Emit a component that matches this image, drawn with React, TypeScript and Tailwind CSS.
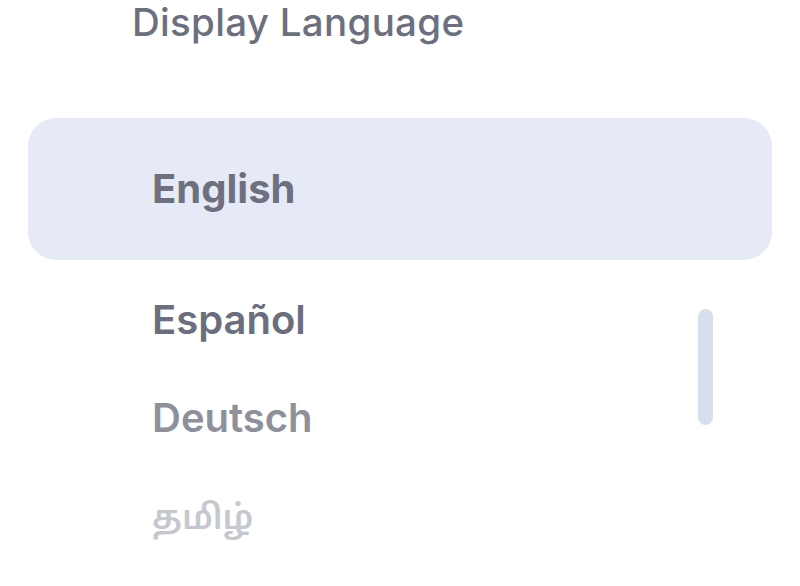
const languages = [
  { label: "English", selected: true, color: "text-[#6e7080]", size: "text-[40px] font-bold" },
  { label: "Español", selected: false, color: "text-[#6b6e7e]", size: "text-[40px] font-semibold" },
  { label: "Deutsch", selected: false, color: "text-[#8e909c]", size: "text-[40px] font-semibold" },
  { label: "தமிழ்", selected: false, color: "text-[#c6c8cf]", size: "text-[34px] font-semibold" },
];

const App = () => {
  return (
    <div
      className="w-[800px] h-[586px] overflow-hidden bg-white"
      style={{ fontFamily: "Inter, 'Noto Sans', 'Noto Sans Tamil', sans-serif" }}
    >
      <h1 className="pl-[132px] text-[38.5px] leading-[44px] font-[550] text-[#6b6f80] tracking-[0.3px]">
        Display Language
      </h1>
      <div className="relative mt-[74px]">
        <div className="mx-[28px] h-[142px] rounded-[28px] bg-[#e6eaf6] flex items-center pl-[124px]">
          <span className="text-[40px] font-bold text-[#6e7080]">English</span>
        </div>
        <ul className="flex flex-col pt-[11px]">
          {languages
            .filter((lang) => !lang.selected)
            .map((lang) => (
              <li key={lang.label} className="h-[98px] flex items-center pl-[152px]">
                <span className={`${lang.size} ${lang.color}`}>{lang.label}</span>
              </li>
            ))}
        </ul>
        <div className="absolute left-[698px] top-[191px] w-[15px] h-[116px] rounded-full bg-[#d9deef]" />
      </div>
    </div>
  );
};

export default App;
